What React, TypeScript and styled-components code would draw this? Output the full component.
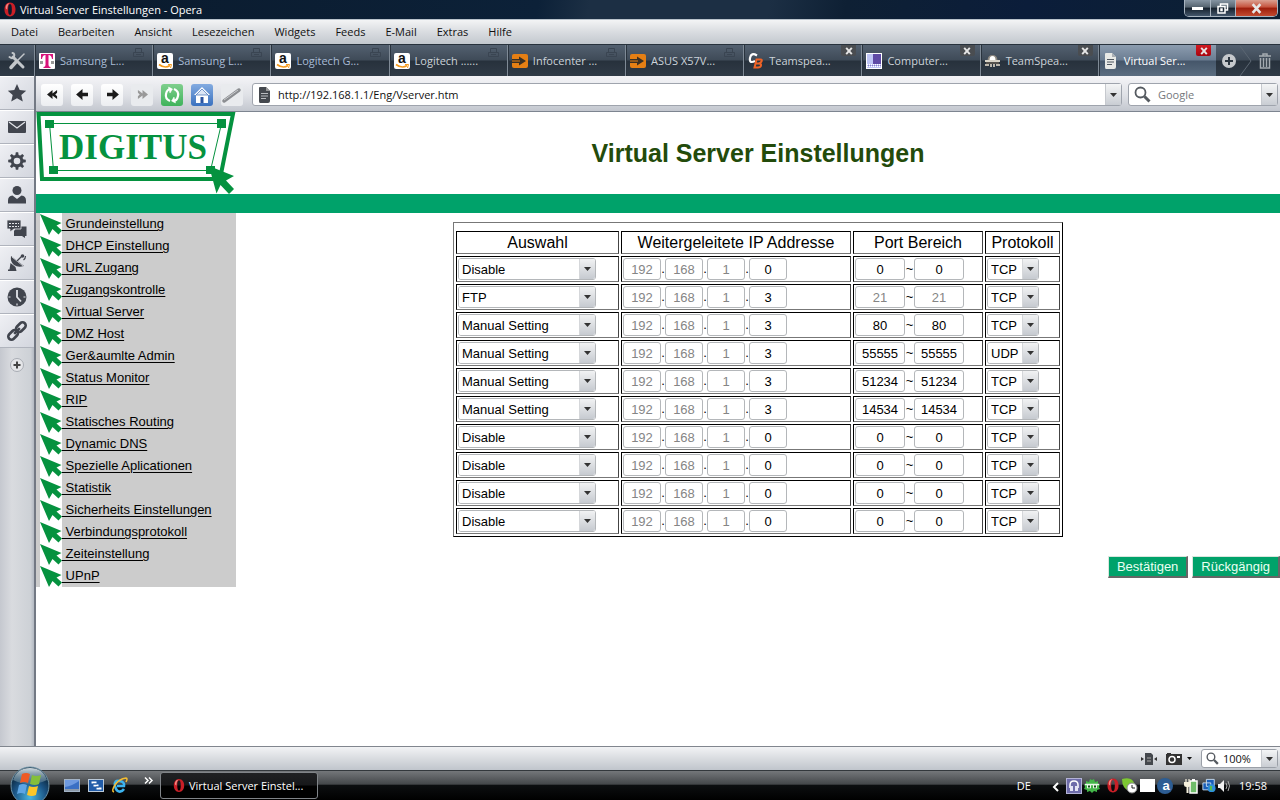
import React from 'react';
import styled, { createGlobalStyle, css } from 'styled-components';

const ui = "'Open Sans', 'Noto Sans', sans-serif";
const web = "'Liberation Sans', Arial, sans-serif";
const green = '#00a26a';
const logoGreen = '#05923f';
const steel = '#41454e';

const GlobalStyle = createGlobalStyle`
  * { box-sizing: border-box; }
  body { margin: 0; background: #fff; font-family: ${ui}; font-size: 11px; color: #111; }
  button, input, select { font: inherit; color: inherit; margin: 0; padding: 0; }
  button { cursor: pointer; }
  svg { display: block; flex: none; overflow: visible; }
`;

const Desktop = styled.div`
  min-height: 100vh;
  display: flex;
  flex-direction: column;
`;

/* ---------- window frame ---------- */

const TitleBar = styled.header`
  height: 20px;
  display: flex;
  align-items: center;
  gap: 4px;
  padding-left: 4px;
  color: #fff;
  white-space: nowrap;
  background: linear-gradient(100deg, #0a1a2c 0%, #0c2138 42%, #1c2f44 46%, #1c2f44 60%, #0e2034 66%, #0b1d3a 80%, #0c2033 100%);
  border-bottom: 1px solid #b9c3cc;
`;

const WindowTitle = styled.h1`
  flex: 1;
  margin: 0;
  font-size: 11px;
  line-height: 18px;
  font-weight: 500;
`;

const WindowButtons = styled.div`
  align-self: flex-start;
  display: flex;
  height: 17px;
  margin-right: 2px;
  border: 1px solid #a8b4c0;
  border-top: 0;
  border-radius: 0 0 5px 5px;
  overflow: hidden;
`;

const WindowButton = styled.button<{ $close?: boolean }>`
  width: ${p => (p.$close ? 42 : 25)}px;
  border: 0;
  border-left: 1px solid #a8b4c0;
  display: grid;
  place-items: center;
  background: ${p => p.$close
    ? 'linear-gradient(#dba091, #c5513b 45%, #9c1d0b 50%, #c24a30)'
    : 'linear-gradient(#8594a2, #55636f 45%, #15202c 50%, #43566b)'};
  &:first-child { border-left: 0; }
`;

const MenuBar = styled.nav`
  height: 24px;
  display: flex;
  align-items: center;
  padding: 0 0 2px 1px;
  background: linear-gradient(#f3f4f5, #d9dce0 50%, #c3c8ce);
`;

const MenuItem = styled.button`
  border: 0;
  background: none;
  padding: 0 10px;
  white-space: nowrap;
`;

/* ---------- tabs ---------- */

const TabBar = styled.div`
  height: 32px;
  display: flex;
  background: linear-gradient(#536070, #3f4b58 48%, #27313c 52%, #303b47);
  border-top: 1px solid #28323d;
`;

const ToolsButton = styled.button`
  width: 34px;
  flex: none;
  border: 0;
  background: none;
  display: grid;
  place-items: center;
`;

const TabItem = styled.button<{ $active?: boolean; $dim?: boolean }>`
  position: relative;
  flex: 1 1 0;
  min-width: 0;
  display: flex;
  align-items: center;
  gap: 5px;
  padding: 0 0 0 4px;
  border: 0;
  border-left: 1px solid #7f8a96;
  box-shadow: inset 1px 0 #29333e;
  background: ${p => (p.$active ? 'linear-gradient(#8c9caf, #6b7d92 48%, #45566a 52%, #5b6d80)' : 'none')};
  color: ${p => (p.$active ? '#fff' : p.$dim ? '#a9bcd6' : '#ccd3da')};
  white-space: nowrap;
`;

const TabIcon = styled.span`
  width: 16px;
  display: grid;
  place-items: center;
`;

const TabClose = styled.span<{ $active?: boolean }>`
  position: absolute;
  top: 0;
  right: 5px;
  width: 15px;
  height: 11px;
  border-radius: 0 0 2px 2px;
  display: grid;
  place-items: center;
  background: ${p => (p.$active ? 'linear-gradient(#d21a22, #a80510)' : '#4a4d51')};
`;

const TabLock = styled.span`
  position: absolute;
  top: 3px;
  right: 8px;
`;

const TabTools = styled.div`
  width: 64px;
  flex: none;
  display: flex;
  align-items: center;
  justify-content: space-between;
  padding-right: 9px;
`;

const BareButton = styled.button`
  border: 0;
  background: none;
  display: grid;
  place-items: center;
`;

/* ---------- browser body ---------- */

const Browser = styled.div`
  flex: 1;
  display: flex;
`;

const Panels = styled.aside`
  width: 36px;
  flex: none;
  background: linear-gradient(90deg, #c5c8cf, #d9dbdf 35%, #cdd1d6 90%, #b4bac3);
  border-right: 2px solid #737984;
`;

const PanelButton = styled.button`
  width: 34px;
  height: 34px;
  border: 0;
  border-bottom: 1px solid #b0b4bd;
  box-shadow: inset 0 1px #fff;
  background: linear-gradient(135deg, #eff0f4, #d3d6de);
  display: grid;
  place-items: center;
`;

const AddPanel = styled(BareButton)`
  width: 34px;
  height: 34px;
`;

const View = styled.div`
  flex: 1;
  min-width: 0;
  display: flex;
  flex-direction: column;
  background: #fff;
`;

const Toolbar = styled.div`
  height: 36px;
  display: flex;
  align-items: center;
  padding: 2px 2px 0 5px;
  background: linear-gradient(#f4f4f7, #dfe1e6 55%, #c3c7cf);
  border-bottom: 1px solid #7d8590;
`;

const ToolGroup = styled.div`
  display: flex;
  gap: 8px;
  margin-right: 9px;
`;

const ToolButton = styled.button<{ $tone?: string }>`
  width: 22px;
  height: 22px;
  border: 0;
  border-radius: 3px;
  display: grid;
  place-items: center;
  background: ${p => p.$tone ?? 'linear-gradient(#fff, #eceef1)'};
  &:disabled { background: #e9ebee; }
`;

const Field = styled.div<{ $search?: boolean }>`
  height: 23px;
  display: flex;
  align-items: center;
  gap: 7px;
  padding-left: 5px;
  border: 1px solid #9fa4ad;
  border-radius: 3px;
  background: #fff;
  ${p => p.$search
    ? css`width: 150px; flex: none; margin-left: 6px;`
    : css`flex: 1; min-width: 0;`}
`;

const FieldInput = styled.input`
  flex: 1;
  min-width: 0;
  border: 0;
  outline: 0;
  background: none;
  &::placeholder { color: #75787d; }
`;

const FieldDrop = styled.button`
  width: 16px;
  align-self: stretch;
  border: 0;
  border-left: 1px solid #c6c9ce;
  background: linear-gradient(#f4f5f6, #c9cdd3);
  display: grid;
  place-items: center;
`;

/* ---------- router page ---------- */

const PageHeader = styled.header`
  display: flex;
  height: 82px;
`;

const PageTitle = styled.h2`
  flex: 1;
  margin: 0;
  text-align: center;
  font: bold 25px/82px ${web};
  color: #234b0b;
`;

const GreenBar = styled.div`
  height: 19px;
  background: ${green};
`;

const PageBody = styled.div`
  flex: 1;
  display: flex;
  align-items: flex-start;
  font: 13px ${web};
  color: #000;
`;

const SideNav = styled.nav`
  width: 200px;
  flex: none;
  padding-left: 4px;
  background: #ccc;
`;

const NavRow = styled.div`
  height: 22px;
  display: flex;
  line-height: 22px;
`;

const NavMarker = styled.span`
  width: 22px;
  background: #fff;
`;

const NavLink = styled.a`
  color: #000;
  white-space: pre;
  text-underline-offset: 2px;
`;

const Content = styled.main`
  flex: 1;
  display: flex;
  flex-direction: column;
  align-items: center;
  padding-top: 9px;
`;

const ServerTable = styled.table`
  width: 610px;
  table-layout: fixed;
  border: 1px solid;
  border-color: #777 #000 #000 #777;
  border-spacing: 2px;
  padding: 6px 0 0;
`;

const HeadCell = styled.th<{ $w: number }>`
  width: ${p => p.$w}px;
  height: 23px;
  padding: 0;
  border: 1px solid;
  border-color: #000 #444 #777 #000;
  font: 16px/20px ${web};
`;

const Cell = styled.td`
  height: 26px;
  padding: 1px;
  border: 1px solid;
  border-color: #000 #444 #777 #000;
`;

const CellRow = styled.div`
  display: flex;
  height: 22px;
`;

const Box = styled.input<{ $w: number }>`
  width: ${p => p.$w}px;
  height: 22px;
  border: 1px solid #b4b7ba;
  border-radius: 3px;
  background: #fff;
  text-align: center;
  &:disabled { color: #858585; }
`;

const Gap = styled.span<{ $w: number }>`
  width: ${p => p.$w}px;
  text-align: center;
  line-height: 22px;
`;

const SelectBox = styled.span<{ $w: number }>`
  display: grid;
  width: ${p => p.$w}px;
  height: 22px;
  border: 1px solid #b4b7ba;
  border-radius: 3px;
  overflow: hidden;
  & > * { grid-area: 1 / 1; }
`;

const SelectInput = styled.select`
  appearance: none;
  width: 100%;
  border: 0;
  background: #fff;
  padding-left: 3px;
`;

const SelectArrow = styled.span`
  justify-self: end;
  width: 16px;
  display: grid;
  place-items: center;
  pointer-events: none;
  border-left: 1px solid #d5d7da;
  background: linear-gradient(#f1f2f3, #c6cad0);
`;

const Actions = styled.div`
  align-self: flex-end;
  display: flex;
  gap: 4px;
  margin-top: 19px;
`;

const ActionButton = styled.button`
  height: 22px;
  padding: 0 8px;
  border: 1px solid;
  border-width: 1px 2px 2px 1px;
  border-color: #d9e6dd #666 #666 #d9e6dd;
  border-radius: 0;
  background: ${green};
  color: #e9fff2;
`;

/* ---------- status and task bar ---------- */

const StatusBar = styled.footer`
  height: 24px;
  display: flex;
  align-items: center;
  justify-content: flex-end;
  gap: 9px;
  padding-right: 2px;
  border-top: 1px solid #81868e;
  background: linear-gradient(#f2f3f5, #d9dce0 50%, #c0c5cc);
`;

const SnapshotButton = styled(BareButton)`
  grid-template-columns: auto auto;
  gap: 5px;
`;

const Zoom = styled.div`
  width: 77px;
  height: 19px;
  display: flex;
  align-items: center;
  gap: 4px;
  padding-left: 4px;
  border: 1px solid #9a9fa7;
  border-radius: 3px;
  background: #fff;
`;

const TaskBar = styled.footer`
  height: 30px;
  display: flex;
  align-items: center;
  padding: 0 13px 0 8px;
  color: #fff;
  border-top: 1px solid #33383c;
  background: linear-gradient(#74777a, #45484b 45%, #0c0e10 50%, #000);
`;

const StartButton = styled.button`
  align-self: flex-end;
  width: 44px;
  height: 34px;
  flex: none;
  border: 0;
  background: none;
  overflow: hidden;
`;

const QuickLaunch = styled.div`
  display: flex;
  gap: 7px;
  margin-left: 12px;
`;

const More = styled.button`
  border: 0;
  background: none;
  align-self: flex-start;
  margin: 6px 7px 0 16px;
`;

const TaskItem = styled.button`
  width: 158px;
  height: 27px;
  display: flex;
  align-items: center;
  gap: 4px;
  padding-left: 12px;
  border: 1px solid #808488;
  border-radius: 3px;
  background: linear-gradient(#202123, #17181a 48%, #000 52%);
  white-space: nowrap;
`;

const Tray = styled.div`
  margin-left: auto;
  display: flex;
  align-items: center;
`;

const Language = styled.span`
  margin-right: 21px;
`;

const TrayIcons = styled.div`
  display: flex;
  align-items: center;
  gap: 2px;
  margin-left: 7px;
`;

const Clock = styled.time`
  margin-left: 9px;
`;

/* ---------- drawings ---------- */

const Down = () => (
  <svg width="7" height="4" viewBox="0 0 7 4"><path d="M0 0h7L3.500 4z" fill="#333" /></svg>
);

const OperaO = ({ h = 15 }: { h?: number }) => (
  <svg width="12" height={h} viewBox="0 0 13 15">
    <path fillRule="evenodd" fill="#c91f27" d="M6.500 0C10.500 0 12.500 3.500 12.500 7.500S10.500 15 6.500 15 .5 11.500.5 7.500 2.500 0 6.500 0zM6.500 1.500C5 1.500 4.500 4 4.500 7.500S5 13.500 6.500 13.500 8.500 11 8.500 7.500 8 1.500 6.500 1.500z" />
    <path d="M2 4C3 1 5 .5 6 .8 4 2 3.500 5 3.500 7.500 2 7 1.500 6 2 4z" fill="#f08a85" />
  </svg>
);

const Cross = ({ size = 9 }: { size?: number }) => (
  <svg width={size} height={size} viewBox="0 0 10 10"><path d="M1.500 1l7 8M8.500 1l-7 8" stroke="#e6e6e6" strokeWidth="2.400" /></svg>
);

const Telekom = () => (
  <svg width="16" height="16" viewBox="0 0 16 16">
    <rect width="16" height="16" rx="1" fill="#fff" />
    <path d="M2 1h12v5h-1Q12.500 2 9.500 2v10q0 2 2 2v1h-7v-1q2 0 2-2V2Q3.500 2 3 6H2z" fill="#d9137b" />
    <path d="M1 8h3v3H1zM12 8h3v3h-3z" fill="#999" />
  </svg>
);

const Amazon = () => (
  <svg width="16" height="16" viewBox="0 0 16 16">
    <rect width="16" height="16" rx="2" fill="#fff" />
    <text x="8" y="10" textAnchor="middle" fontFamily="Liberation Sans" fontWeight="bold" fontSize="14" fill="#111">a</text>
    <path d="M2 11.500q6 4.500 11 1" fill="none" stroke="#f59a1c" strokeWidth="1.600" />
    <path d="M11 11.500h3.500L13.500 15" fill="none" stroke="#f59a1c" />
  </svg>
);

const OrangeArrow = () => (
  <svg width="16" height="16" viewBox="0 0 16 16">
    <rect y="1" width="16" height="14" rx="2" fill="#e57f14" />
    <path d="M0 6h7V3.500l7 4.500-7 4.500V10H0z" fill="#3b3023" />
    <path d="M0 8h8" stroke="#e57f14" />
  </svg>
);

const ComputerBase = () => (
  <svg width="16" height="16" viewBox="0 0 16 16" fill="none">
    <path d="M9 2.500Q3-1 2 5T7 8" stroke="#fff" strokeWidth="2.200" />
    <path d="M8.500 6.500h4q2 0 1 2t-3 2q3 0 2.500 2T10 14.500H6.500zM8 10.500h3" stroke="#f06326" strokeWidth="2" />
  </svg>
);

const PurpleBox = () => (
  <svg width="16" height="16" viewBox="0 0 16 16">
    <rect x=".5" y=".5" width="15" height="15" fill="#bfc5f5" stroke="#fff" />
    <path d="M7 1h8v10H7z" fill="#5f4aa5" />
    <path d="M1 11.500h14M1 13.500h14" stroke="#fff" strokeDasharray="1 1" />
    <path d="M2 12.500h13" stroke="#8e80c8" strokeDasharray="1 1" />
  </svg>
);

const Spy = () => (
  <svg width="15" height="14" viewBox="0 0 15 14">
    <path d="M2.500 6Q3 1 7.500 1t5 5z" fill="#8e8981" />
    <path d="M4.500 6Q4.500 2 7.500 2t3 4z" fill="#fff" />
    <path d="M0 6h15v2H0z" fill="#d8d3c8" />
    <path d="M1 8h13v2H1z" fill="#55514c" />
    <path d="M0 10h4v2H0zM5 10h2v3H5zM8 10h2v3H8zM11 10h4v2h-4z" fill="#bcb7ad" />
  </svg>
);

const Doc = ({ dark }: { dark?: boolean }) => (
  <svg width="13" height="16" viewBox="0 0 13 16">
    <path d="M2 0h6l4 4v10q0 2-2 2H2q-1 0-1-2V1q0-1 1-1z" fill={dark ? '#44484e' : '#e8e9e6'} />
    <path d="M3 6.500h7M3 9h7M3 11.500h5" stroke={dark ? '#b9bcc0' : '#4f5760'} />
    <path d="M8 0v4h4z" fill={dark ? '#999' : '#aaafb4'} />
  </svg>
);

const Arrow = ({ left, double, pale }: { left?: boolean; double?: boolean; pale?: boolean }) => (
  <svg width="13" height="11" viewBox="0 0 14 12" fill={pale ? '#999' : '#1b1b1b'}>
    <g transform={left ? 'matrix(-1 0 0 1 14 0)' : undefined}>
      {double ? <path d="M2 1l5 4V1l6 5-6 5V7l-5 4V8l2-2-2-2z" /> : <path d="M1 4h6V0l7 6-7 6V8H1z" />}
    </g>
  </svg>
);

const Magnifier = ({ size = 17 }: { size?: number }) => (
  <svg width={size} height={size} viewBox="0 0 17 17" fill="none" stroke="#555a60">
    <circle cx="6.500" cy="6.500" r="5" strokeWidth="1.800" /><path d="M10.500 10.500l5 5" strokeWidth="3" />
  </svg>
);

const PanelSvg = ({ children }: { children: React.ReactNode }) => (
  <svg width="20" height="20" viewBox="0 0 20 20" fill={steel}>{children}</svg>
);

const StarIcon = () => (
  <PanelSvg><path d="M10 1l2.700 6.100 6.500.6-4.900 4.400 1.500 6.500L10 15.200l-5.800 3.400 1.500-6.500L.8 7.700l6.500-.6z" /></PanelSvg>
);

const MailIcon = () => (
  <PanelSvg><rect x="1" y="4" width="18" height="12" rx="1" /><path d="M2 5l8 6 8-6" fill="none" stroke="#e3e5ea" strokeWidth="1.200" /></PanelSvg>
);

const GearIcon = () => (
  <PanelSvg>
    <circle cx="10" cy="10" r="4.800" fill="none" stroke={steel} strokeWidth="3" />
    {[0, 45, 90, 135, 180, 225, 270, 315].map(a => <path key={a} d="M8.300 4.500L8.800 1.200h2.400l.5 3.300z" transform={`rotate(${a} 10 10)`} />)}
  </PanelSvg>
);

const PersonIcon = () => (
  <PanelSvg><circle cx="10" cy="5.500" r="4.500" /><path d="M1 18.500v-3Q1 11 5.500 10.500L10 14l4.500-3.500Q19 11 19 15.500v3z" /></PanelSvg>
);

const ChatIcon = () => (
  <PanelSvg>
    <path d="M9 9h2V7.500h8.500V17H18v2l-3-2H7v-5z" />
    <path d="M0 1h14v9H7l-4 3v-3H0z" stroke="#e3e5ea" strokeWidth=".8" />
    <path d="M2 4.500h10M2 7.500h10" stroke="#e3e5ea" strokeDasharray="2 1" />
  </PanelSvg>
);

const DishIcon = () => (
  <PanelSvg>
    <path d="M4 3q-1 6 3 9t10 1z" />
    <path d="M5 4l11 9" stroke="#e3e5ea" strokeWidth=".8" />
    <path d="M10 8l5-5" stroke={steel} strokeWidth="1.300" />
    <circle cx="15.500" cy="3" r="1.800" />
    <path d="M16.500 7q2-1.500 2-4" fill="none" stroke={steel} strokeWidth="1.200" />
    <path d="M3.500 10l5 4 1 4H1v-1.500h1.500z" />
  </PanelSvg>
);

const ClockIcon = () => (
  <PanelSvg>
    <circle cx="10" cy="10" r="9.500" />
    <path d="M10 3v7l4 4.500" fill="none" stroke="#e3e5ea" strokeWidth="1.800" />
    <path d="M1.500 10h2M16.500 10h2M10 16.500v2" stroke="#e3e5ea" strokeWidth="1.200" />
  </PanelSvg>
);

const LinkIcon = () => (
  <PanelSvg>
    <g transform="rotate(-45 10 10)" fill="none" stroke={steel} strokeWidth="2.600">
      <rect x="-1" y="6.800" width="11" height="6.400" rx="3.200" />
      <rect x="10" y="6.800" width="11" height="6.400" rx="3.200" />
      <path d="M6 10h8" />
    </g>
  </PanelSvg>
);

const Digitus = () => (
  <svg width="200" height="82" viewBox="0 0 200 82" role="img" aria-label="Digitus">
    <path d="M2.500 2H197L184 67H6z" fill="#fff" stroke={logoGreen} strokeWidth="4" />
    <path d="M13.500 11.500H185.500L174.500 58.500H17.500z" fill="none" stroke={logoGreen} />
    <path d="M9 8h9v8H9zM181 7h9v9h-9zM13 54h9v8h-9zM170 54h9v8h-9z" fill={logoGreen} />
    <text x="97" y="47" textAnchor="middle" fontFamily="Liberation Serif" fontWeight="bold" fontSize="35" fill={logoGreen}>DIGITUS</text>
    <path d="M173 54l25 10-8 4.500 8 8.500-5 5-8.500-9-4 8.500z" fill={logoGreen} />
  </svg>
);

const NavArrow = () => (
  <svg width="22" height="22" viewBox="0 0 22 22"><path d="M0 1l21.500 9-5 2.500L22 17.500 18.500 21.500 12.500 16 9 22z" fill={logoGreen} /></svg>
);

const StartOrb = () => (
  <svg width="44" height="34" viewBox="0 0 44 34">
    <defs>
      <radialGradient id="orb" cx=".5" cy=".8" r=".7"><stop offset="0" stopColor="#49b5df" /><stop offset=".6" stopColor="#1b5485" /><stop offset="1" stopColor="#0b2438" /></radialGradient>
      <linearGradient id="gloss" x2="0" y2="1"><stop offset="0" stopColor="#cfdae0" /><stop offset="1" stopColor="#5f8498" stopOpacity=".5" /></linearGradient>
    </defs>
    <circle cx="22" cy="20" r="19" fill="url(#orb)" stroke="#6f94a8" />
    <path d="M5 14Q9 2 22 2t17 12q-8 4-17 4T5 14z" fill="url(#gloss)" />
    <path d="M14 8q4-2 8 0l-2 9q-4-2-8 0z" fill="#ee5a24" />
    <path d="M24 9q4 2 9 0l-2 9q-4 2-9 0z" fill="#84bf3b" />
    <path d="M11 19q4-2 8 0l-2 9q-4-2-8 0z" fill="#5ea5e4" />
    <path d="M21 20q4 2 9 0l-2 9q-4 2-9 0z" fill="#fcc628" />
  </svg>
);

/* ---------- data ---------- */

const menus = ['Datei', 'Bearbeiten', 'Ansicht', 'Lesezeichen', 'Widgets', 'Feeds', 'E-Mail', 'Extras', 'Hilfe'];

type TabData = { text: string; icon: React.ReactNode; mark: 'lock' | 'close'; dim?: boolean; active?: boolean };
const tabs: TabData[] = [
  { text: 'Samsung L...', icon: <Telekom />, mark: 'lock', dim: true },
  { text: 'Samsung L...', icon: <Amazon />, mark: 'lock', dim: true },
  { text: 'Logitech G...', icon: <Amazon />, mark: 'lock', dim: true },
  { text: 'Logitech ......', icon: <Amazon />, mark: 'lock' },
  { text: 'Infocenter ...', icon: <OrangeArrow />, mark: 'lock' },
  { text: 'ASUS X57V...', icon: <OrangeArrow />, mark: 'lock' },
  { text: 'Teamspea...', icon: <ComputerBase />, mark: 'close' },
  { text: 'Computer...', icon: <PurpleBox />, mark: 'close' },
  { text: 'TeamSpea...', icon: <Spy />, mark: 'close' },
  { text: 'Virtual Ser...', icon: <Doc />, mark: 'close', active: true },
];

const panels: [string, React.ReactNode][] = [
  ['Lesezeichen', <StarIcon />],
  ['E-Mail', <MailIcon />],
  ['Widgets', <GearIcon />],
  ['Kontakte', <PersonIcon />],
  ['Chat', <ChatIcon />],
  ['Feeds', <DishIcon />],
  ['Verlauf', <ClockIcon />],
  ['Links', <LinkIcon />],
];

const links = ['Grundeinstellung', 'DHCP Einstellung', 'URL Zugang', 'Zugangskontrolle', 'Virtual Server', 'DMZ Host',
  'Ger&aumlte Admin', 'Status Monitor', 'RIP', 'Statisches Routing', 'Dynamic DNS', 'Spezielle Aplicationen', 'Statistik',
  'Sicherheits Einstellungen', 'Verbindungsprotokoll', 'Zeiteinstellung', 'UPnP'];

type Rule = [kind: string, host: string, port: string, protocol: string];
const rules: Rule[] = [
  ['Disable', '0', '0', 'TCP'],
  ['FTP', '3', '21', 'TCP'],
  ['Manual Setting', '3', '80', 'TCP'],
  ['Manual Setting', '3', '55555', 'UDP'],
  ['Manual Setting', '3', '51234', 'TCP'],
  ['Manual Setting', '3', '14534', 'TCP'],
  ['Disable', '0', '0', 'TCP'],
  ['Disable', '0', '0', 'TCP'],
  ['Disable', '0', '0', 'TCP'],
  ['Disable', '0', '0', 'TCP'],
];

const Select = ({ width, value, options, label }: { width: number; value: string; options: string[]; label: string }) => (
  <SelectBox $w={width}>
    <SelectInput defaultValue={value} aria-label={label}>
      {options.map(o => <option key={o}>{o}</option>)}
    </SelectInput>
    <SelectArrow><Down /></SelectArrow>
  </SelectBox>
);

const RuleRow = ({ rule, index }: { rule: Rule; index: number }) => {
  const [kind, host, port, protocol] = rule;
  const n = index + 1;
  const fixed = kind === 'FTP';
  return (
    <tr>
      <Cell><Select width={138} value={kind} options={['Disable', 'FTP', 'Manual Setting']} label={`Auswahl ${n}`} /></Cell>
      <Cell>
        <CellRow>
          {['192', '168', '1'].map(v => (
            <React.Fragment key={v}>
              <Box $w={38} defaultValue={v} disabled aria-label={`IP ${v}, ${n}`} />
              <Gap $w={4}>.</Gap>
            </React.Fragment>
          ))}
          <Box $w={38} defaultValue={host} aria-label={`IP Host ${n}`} />
        </CellRow>
      </Cell>
      <Cell>
        <CellRow>
          <Box $w={50} defaultValue={port} disabled={fixed} aria-label={`Port von ${n}`} />
          <Gap $w={9}>~</Gap>
          <Box $w={50} defaultValue={port} disabled={fixed} aria-label={`Port bis ${n}`} />
        </CellRow>
      </Cell>
      <Cell><Select width={52} value={protocol} options={['TCP', 'UDP']} label={`Protokoll ${n}`} /></Cell>
    </tr>
  );
};

export default function App() {
  return (
    <Desktop>
      <GlobalStyle />
      <TitleBar>
        <OperaO />
        <WindowTitle>Virtual Server Einstellungen - Opera</WindowTitle>
        <WindowButtons>
          <WindowButton aria-label="Minimieren"><svg width="11" height="4"><path d="M0 1h11v3H0z" fill="#fff" /></svg></WindowButton>
          <WindowButton aria-label="Wiederherstellen">
            <svg width="12" height="11" viewBox="0 0 12 11" fill="none" stroke="#fff" strokeWidth="1.500"><path d="M3.500 3V1h7v6H8.500M1 3.500h7v6.500H1zM4 6h1v1.500H4z" /></svg>
          </WindowButton>
          <WindowButton $close aria-label="Schließen"><Cross size={11} /></WindowButton>
        </WindowButtons>
      </TitleBar>

      <MenuBar>{menus.map(m => <MenuItem key={m}>{m}</MenuItem>)}</MenuBar>

      <TabBar>
        <ToolsButton aria-label="Werkzeuge">
          <svg width="18" height="18" viewBox="0 0 18 18" fill="none" stroke="#c3c7cb" strokeLinecap="round">
            <path d="M5 5l10 10" strokeWidth="3" /><path d="M1.500 5Q5 7.500 6 4.500T4.500 1" strokeWidth="2" />
            <path d="M16 2l-7 7" strokeWidth="1.500" /><path d="M7.500 10.500L3 15.500" strokeWidth="3.500" />
          </svg>
        </ToolsButton>
        {tabs.map((t, i) => (
          <TabItem key={i} $active={t.active} $dim={t.dim}>
            <TabIcon>{t.icon}</TabIcon>
            {t.text}
            {t.mark === 'close'
              ? <TabClose $active={t.active}><Cross size={8} /></TabClose>
              : <TabLock><svg width="11" height="9" viewBox="0 0 11 9" fill="none" stroke="#3a4552"><path d="M.5 4.500h10v4H.5zM2.500 4V.5h6V4M3 6.500h5" /></svg></TabLock>}
          </TabItem>
        ))}
        <TabTools>
          <BareButton aria-label="Neuer Tab">
            <svg width="36" height="31" viewBox="0 0 36 31" fill="none">
              <circle cx="13" cy="16" r="7" fill="#c6c9cc" /><path d="M9 16h8M13 12v8" stroke="#2c3640" strokeWidth="2" />
              <path d="M24 1l11 15-11 15" stroke="#5b6672" />
            </svg>
          </BareButton>
          <BareButton aria-label="Papierkorb">
            <svg width="12" height="16" viewBox="0 0 12 16" fill="none" stroke="#a4aab0" strokeWidth="1.500">
              <path d="M0 3h12M4 3V1h4v2M1.500 5v10h9V5M4.500 5v9M7.500 5v9" />
            </svg>
          </BareButton>
        </TabTools>
      </TabBar>

      <Browser>
        <Panels>
          {panels.map(([name, icon]) => <PanelButton key={name} aria-label={name}>{icon}</PanelButton>)}
          <AddPanel aria-label="Panel hinzufügen">
            <svg width="14" height="14" viewBox="0 0 14 14"><circle cx="7" cy="7" r="6.500" fill="#e5e6e9" stroke="#a9adb4" /><path d="M3.500 7h7M7 3.500v7" stroke="#444" strokeWidth="2" /></svg>
          </AddPanel>
        </Panels>

        <View>
          <Toolbar>
            <ToolGroup>
              <ToolButton aria-label="Rücklauf"><Arrow left double /></ToolButton>
              <ToolButton aria-label="Zurück"><Arrow left /></ToolButton>
              <ToolButton aria-label="Vor"><Arrow /></ToolButton>
              <ToolButton aria-label="Schneller Vorlauf" disabled><Arrow double pale /></ToolButton>
              <ToolButton aria-label="Neu laden" $tone="linear-gradient(#7fcf8d, #3fb35b)">
                <svg width="18" height="18" viewBox="0 0 18 18" fill="none" stroke="#fff" strokeWidth="2.200">
                  <path d="M7 15Q2 13 3 8T8 3M11 3q5 2 4 7t-5 5" /><path d="M5.500 1L9.500 3 7 7zM12.500 17l-4-2L11 11z" fill="#fff" strokeWidth=".5" />
                </svg>
              </ToolButton>
              <ToolButton aria-label="Startseite" $tone="linear-gradient(#83abe0, #3a71bf)">
                <svg width="18" height="18" viewBox="0 0 18 18"><path d="M9 1l8 8h-2v8H3V9H1z" fill="#fff" /><path d="M9 3l6 6H3z" fill="#dce6f5" stroke="#3f6fb4" strokeWidth=".7" /><path d="M7.500 11h3v6h-3z" fill="#2b54a0" /></svg>
              </ToolButton>
              <ToolButton aria-label="Wand" disabled>
                <svg width="20" height="16" viewBox="0 0 20 16"><path d="M2 14L17 3" stroke="#8b8d91" strokeWidth="3.500" strokeLinecap="round" /><path d="M2 13L16 3" stroke="#c9cbce" /></svg>
              </ToolButton>
            </ToolGroup>
            <Field>
              <Doc dark />
              <FieldInput aria-label="Adresse" defaultValue="http://192.168.1.1/Eng/Vserver.htm" />
              <FieldDrop aria-label="Adressliste"><Down /></FieldDrop>
            </Field>
            <Field $search>
              <Magnifier />
              <FieldInput aria-label="Suche" placeholder="Google" />
              <FieldDrop aria-label="Suchmaschine"><Down /></FieldDrop>
            </Field>
          </Toolbar>

          <PageHeader>
            <Digitus />
            <PageTitle>Virtual Server Einstellungen</PageTitle>
          </PageHeader>
          <GreenBar />
          <PageBody>
            <SideNav>
              {links.map(l => (
                <NavRow key={l}>
                  <NavMarker><NavArrow /></NavMarker>
                  <NavLink href="#">{' ' + l}</NavLink>
                </NavRow>
              ))}
            </SideNav>
            <Content>
              <ServerTable>
                <thead>
                  <tr>
                    <HeadCell $w={163}>Auswahl</HeadCell>
                    <HeadCell $w={230}>Weitergeleitete IP Addresse</HeadCell>
                    <HeadCell $w={130}>Port Bereich</HeadCell>
                    <HeadCell $w={75}>Protokoll</HeadCell>
                  </tr>
                </thead>
                <tbody>{rules.map((r, i) => <RuleRow key={i} rule={r} index={i} />)}</tbody>
              </ServerTable>
              <Actions>
                <ActionButton>Bestätigen</ActionButton>
                <ActionButton>Rückgängig</ActionButton>
              </Actions>
            </Content>
          </PageBody>
        </View>
      </Browser>

      <StatusBar>
        <svg width="16" height="14" viewBox="0 0 16 14"><path d="M4 1h6l2 2v10H4z" fill="#44484d" /><path d="M0 5l3 2-3 2zM16 5l-3 2 3 2z" fill="#333" /><path d="M6 6h4M6 9h4" stroke="#aaa" /></svg>
        <SnapshotButton aria-label="Bilder">
          <svg width="16" height="12" viewBox="0 0 16 12"><path d="M0 1h1V0h4v1h11v11H0z" fill="#333" /><circle cx="6" cy="6.500" r="3" fill="none" stroke="#fff" strokeWidth="1.500" /><path d="M11 3h3v2h-3z" fill="#fff" /></svg>
          <svg width="5" height="3"><path d="M0 0h5L2.500 3z" fill="#111" /></svg>
        </SnapshotButton>
        <Zoom>
          <Magnifier size={13} />
          <FieldInput aria-label="Zoom" defaultValue="100%" />
          <FieldDrop aria-label="Zoomstufen"><Down /></FieldDrop>
        </Zoom>
      </StatusBar>

      <TaskBar>
        <StartButton aria-label="Start"><StartOrb /></StartButton>
        <QuickLaunch>
          <BareButton aria-label="Desktop">
            <svg width="17" height="15" viewBox="0 0 17 15"><rect x=".5" y="1.500" width="15" height="12" fill="#3a6fc4" stroke="#a3b3c6" /><path d="M1 9Q8 8 15 3V2H1z" fill="#6f9ae0" /><path d="M1 11h14v2H1z" fill="#8b98a8" /></svg>
          </BareButton>
          <BareButton aria-label="Fenster wechseln">
            <svg width="16" height="15" viewBox="0 0 16 15"><rect x=".5" y="1.500" width="15" height="12" fill="#225ca8" stroke="#bac9d9" /><path d="M3 3h6v3H3zM5 6h6v3H5zM8 9h6v3H8z" fill="#fff" stroke="#225ca8" /></svg>
          </BareButton>
          <BareButton aria-label="Internet Explorer">
            <svg width="17" height="17" viewBox="0 0 17 17" fill="none"><path d="M13 12Q11 15 8 14.500T4 8.500 8.500 4t4.500 5H6" stroke="#3cb4f0" strokeWidth="2.600" /><path d="M3 15Q0 14 4 8T15 1q2 0 0 4" stroke="#f4bd32" strokeWidth="1.500" /></svg>
          </BareButton>
        </QuickLaunch>
        <More aria-label="Weitere Symbole">
          <svg width="9" height="7" viewBox="0 0 9 7" fill="none" stroke="#fff" strokeWidth="1.500"><path d="M1 .5l3 3-3 3M5 .5l3 3-3 3" /></svg>
        </More>
        <TaskItem><OperaO h={13} />Virtual Server Einstel...</TaskItem>
        <Tray>
          <Language>DE</Language>
          <BareButton aria-label="Ausgeblendete Symbole">
            <svg width="7" height="10" viewBox="0 0 7 10" fill="none" stroke="#fff" strokeWidth="2"><path d="M6 2L2 6l4 4" /></svg>
          </BareButton>
          <TrayIcons>
            <svg width="16" height="16" viewBox="0 0 16 16"><rect x=".5" y=".5" width="15" height="15" fill="#6e6caa" stroke="#b3b2d6" /><path d="M4 10V7q0-4 4-4t4 4v3" fill="none" stroke="#fff" strokeWidth="1.500" /><path d="M4 8h3v5H4zM9 8h3v5H9z" fill="#e4e4f5" /></svg>
            <svg width="16" height="16" viewBox="0 0 16 16"><path d="M6 1l2 1 2-1 1 3 3-1v3h2l-1 3 1 2-3 1v2l-3-1-2 2-2-2-3 1v-2l-3-1 1-2-1-3h2V3l3 1z" fill="#43b649" /><path d="M1 6.500h14" stroke="#e8f7e8" strokeWidth="1.500" /><path d="M3 8.500h4M9 8.500h4" stroke="#e8f7e8" strokeWidth="3.500" /><path d="M4 8.500h2M10 8.500h2" stroke="#124d17" strokeWidth="2" /></svg>
          </TrayIcons>
          <TrayIcons>
            <OperaO />
            <svg width="17" height="16" viewBox="0 0 17 16"><path d="M1 1q8-2 11 2t2 9Q6 14 3 9 1 6 1 1z" fill="#7dc832" /><circle cx="11" cy="10" r="5" fill="#fff" stroke="#888" /><path d="M11 7v3h3" fill="none" stroke="#222" /></svg>
            <svg width="15" height="15"><path d="M0 1h15v13H0z" fill="#fff" /></svg>
            <svg width="16" height="16" viewBox="0 0 16 16"><circle cx="8" cy="8" r="8" fill="#2d5d93" /><text x="9" y="12" textAnchor="middle" fontFamily="Liberation Sans" fontWeight="bold" fontSize="13" fill="#fff">a</text></svg>
          </TrayIcons>
          <TrayIcons>
            <svg width="20" height="16" viewBox="0 0 20 16"><rect x="10" y="3" width="7" height="12" fill="#6fbd6a" stroke="#fff" strokeWidth="1.500" /><path d="M12 1h3v2h-3z" fill="#fff" /><path d="M4 4h7v3q0 2-2.500 2v6h-2V9Q4 9 4 7z" fill="#f4efdc" /><path d="M6 1v3M9 1v3" stroke="#f4efdc" strokeWidth="1.200" /></svg>
            <svg width="14" height="15" viewBox="0 0 16 16"><path d="M5 1h9v8H5zM1 5h9v8H1z" fill="#1a5eb8" stroke="#cfe2f5" /><circle cx="11" cy="11" r="4.500" fill="#2f8fdc" /><path d="M9 8l3 1-1 3 2 2-4-1z" fill="#59bf4a" /></svg>
            <svg width="12" height="14" viewBox="0 0 12 14"><path d="M0 5h2l4-4v12L2 9H0z" fill="#f1f1f1" /><path d="M8 4q2 3 0 6M10 2q3 5 0 10" fill="none" stroke="#aaa" /></svg>
          </TrayIcons>
          <Clock>19:58</Clock>
        </Tray>
      </TaskBar>
    </Desktop>
  );
}
